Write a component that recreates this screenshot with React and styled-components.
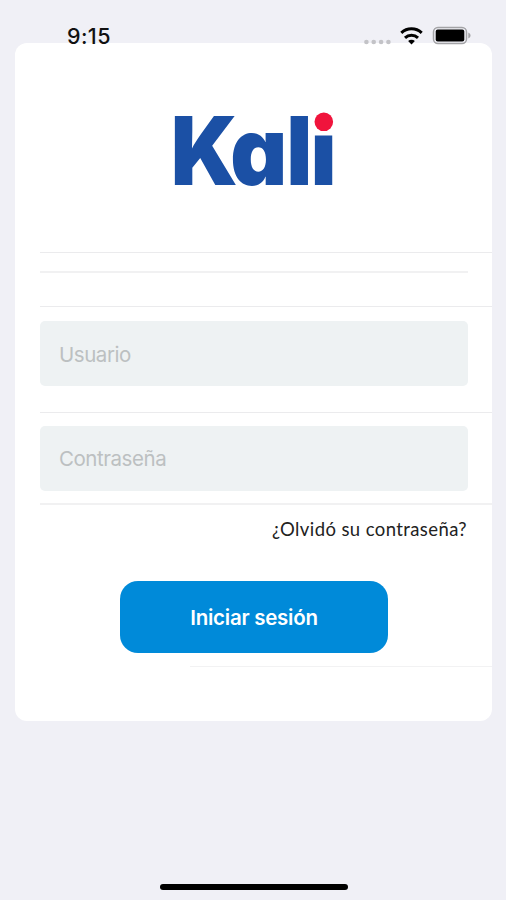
import { useState } from 'react';
import styled, { createGlobalStyle } from 'styled-components';

const GlobalStyle = createGlobalStyle`
  * {
    box-sizing: border-box;
  }

  body {
    margin: 0;
    background: #f0f0f6;
    font-family: Inter, 'Liberation Sans', sans-serif;
  }
`;

const Screen = styled.div`
  display: flex;
  flex-direction: column;
  height: 900px;
  overflow: hidden;
`;

const StatusBar = styled.header`
  position: relative;
  z-index: 1;
  display: flex;
  justify-content: space-between;
  height: 43px;
  padding: 24px 35px 0 67px;
`;

const Time = styled.span`
  font-size: 21.5px;
  font-weight: 500;
  line-height: 25px;
  letter-spacing: 0.4px;
  color: #111;
`;

const StatusIcons = styled.svg`
  width: 108px;
  height: 24px;
`;

const Card = styled.form`
  display: flex;
  flex-direction: column;
  height: 678px;
  margin: 0 14px 0 15px;
  padding-left: 25px;
  border-radius: 12px;
  background: #fff;
`;

const Row = styled.div`
  height: ${({ $height }) => $height}px;
  padding: ${({ $top }) => $top || 0}px 24px 0 0;
  border-bottom: ${({ $line }) => $line || 1}px solid ${({ $line }) => ($line ? '#f1f1f2' : '#ebebed')};
`;

const LogoRow = styled(Row)`
  display: flex;
  justify-content: center;
`;

const Logo = styled.svg`
  width: 164px;
  height: 80px;
  overflow: visible;
`;

const LogoText = styled.text`
  font-family: Inter, sans-serif;
  font-size: 95px;
  font-weight: 900;
  font-feature-settings: 'cv11';
  fill: #1b50a5;
`;

const Divider = styled.hr`
  height: 2px;
  margin: 0;
  border: 0;
  background: #f1f1f2;
`;

const Input = styled.input`
  display: block;
  width: 100%;
  height: ${({ $height }) => $height}px;
  padding: ${({ $shift }) => $shift || 0}px 19px 0;
  border: 0;
  border-radius: 5px;
  outline: none;
  background: #eef2f3;
  font-family: inherit;
  font-size: 20.5px;
  letter-spacing: -0.45px;
  color: #111;

  &::placeholder {
    color: #bcc0c1;
    opacity: 1;
  }
`;

const ForgotLink = styled.a`
  align-self: flex-end;
  margin: 12px 25px 0 0;
  font-family: Lato, sans-serif;
  font-size: 18.5px;
  line-height: 24px;
  letter-spacing: 0.4px;
  color: #222;
`;

const Button = styled.button`
  width: 268px;
  height: 72px;
  margin: 40px 0 0 80px;
  padding-top: 2px;
  border: 0;
  border-radius: 18px;
  background: #008ad9;
  font-family: inherit;
  font-size: 20.5px;
  font-weight: 600;
  letter-spacing: -0.25px;
  color: #fff;
`;

const LastLine = styled.hr`
  width: 302px;
  height: 1px;
  margin: 13px 0 0 auto;
  border: 0;
  background: #f2f2f3;
`;

const HomeIndicator = styled.div`
  width: 188px;
  height: 6px;
  margin: auto auto 10px 160px;
  border-radius: 3px;
  background: #000;
`;

export default function App() {
  const [user, setUser] = useState('');
  const [password, setPassword] = useState('');

  return (
    <>
      <GlobalStyle />
      <Screen>
        <StatusBar>
          <Time>9:15</Time>
          <StatusIcons viewBox="363 24 108 24">
            <g fill="#c3c3c7">
              <circle cx="366.4" cy="42" r="2.3" />
              <circle cx="373.7" cy="42" r="2.3" />
              <circle cx="381.1" cy="42" r="2.3" />
              <circle cx="388.4" cy="42" r="2.3" />
            </g>
            <g fill="none" stroke="#000" strokeWidth="3">
              <path d="M401.3 32.8a15 15 0 0 1 20.4 0" />
              <path d="M405 37.8a9.5 9.5 0 0 1 13 0" />
            </g>
            <path d="M411.5 44.4l-3.4-3.4a4.9 4.9 0 0 1 6.8 0z" fill="#000" />
            <rect x="433.5" y="27.5" width="33" height="16" rx="4.5" fill="none" stroke="#a3a3a6" strokeWidth="1.5" />
            <rect x="435.7" y="29.6" width="28.6" height="11.9" rx="2" fill="#000" />
            <path d="M468.3 32.6c3 1.5 3 4.5 0 6z" fill="#a3a3a6" />
          </StatusIcons>
        </StatusBar>

        <Card onSubmit={(e) => e.preventDefault()}>
          <LogoRow $height={210} $top={67}>
            <Logo viewBox="172 110 164 80" role="img">
              {/* the blue dot of the i is cut away, the red one replaces it */}
              <clipPath id="logo-clip">
                <path d="M165 100H312V135.5H345V195H165z" />
              </clipPath>
              <g clipPath="url(#logo-clip)">
                <LogoText y="185" x="183.7 247.5 307.7 333.8" transform="scale(0.93 1)">
                  Kali
                </LogoText>
              </g>
              <circle cx="323.8" cy="121.8" r="9.3" fill="#f0143c" />
            </Logo>
          </LogoRow>
          <Row $height={54} $top={18}>
            <Divider />
          </Row>
          <Row $height={106} $top={14}>
            <Input
              $height={65}
              $shift={1}
              placeholder="Usuario"
              value={user}
              onChange={(e) => setUser(e.target.value)}
            />
          </Row>
          <Row $height={92} $top={13} $line={2}>
            <Input
              $height={65}
              type="password"
              placeholder="Contraseña"
              value={password}
              onChange={(e) => setPassword(e.target.value)}
            />
          </Row>
          <ForgotLink>¿Olvidó su contraseña?</ForgotLink>
          <Button type="submit">Iniciar sesión</Button>
          <LastLine />
        </Card>

        <HomeIndicator />
      </Screen>
    </>
  );
}
